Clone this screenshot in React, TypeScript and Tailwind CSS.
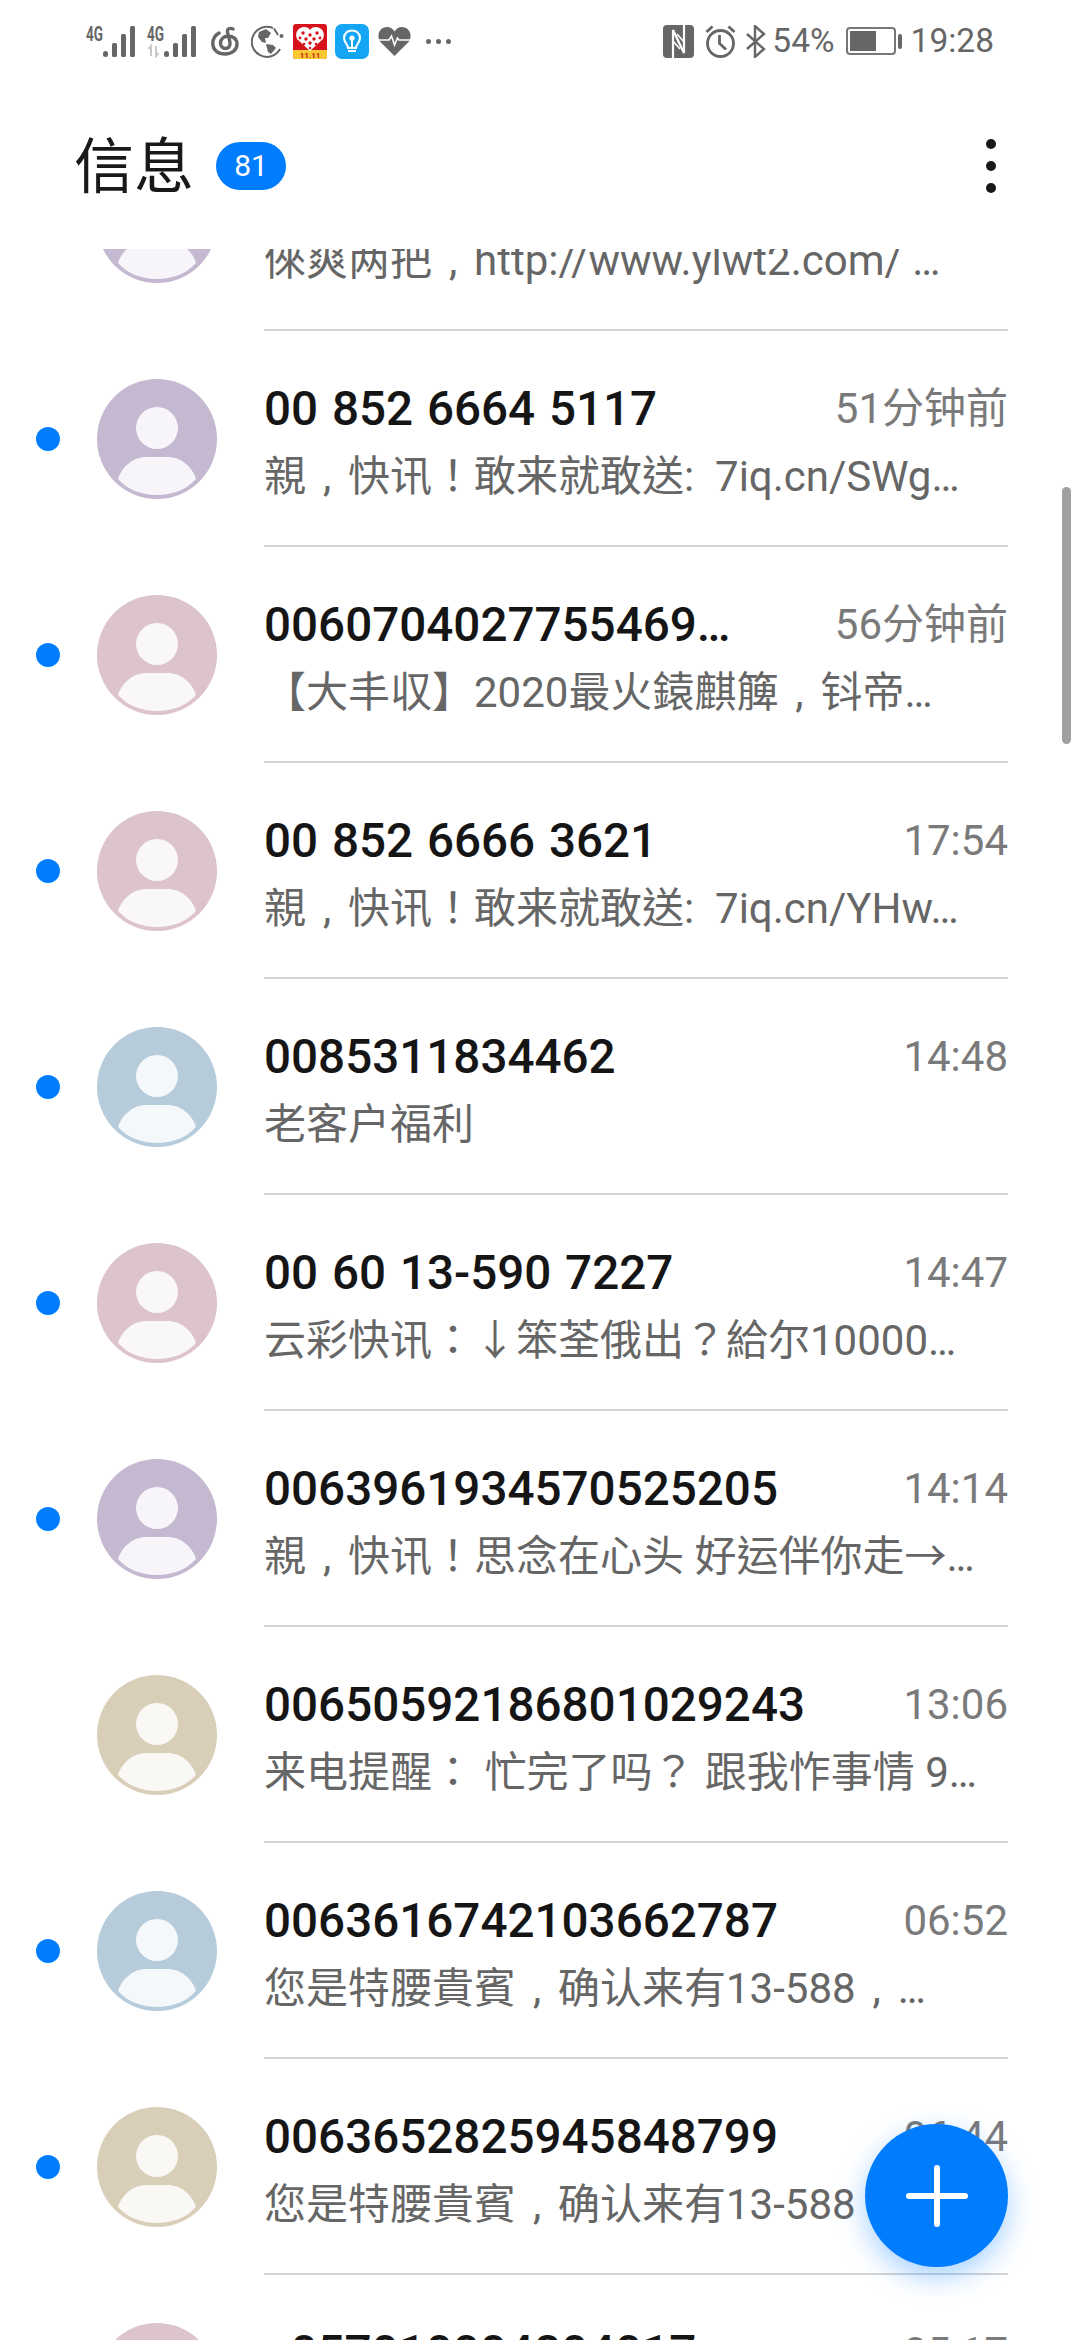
import React from 'react';

interface Thread {
  name: string;
  time: string;
  preview: string;
  tone: 'purple' | 'pink' | 'blue' | 'tan';
  unread: boolean;
}

const threads: Thread[] = [
  { name: '00 00', time: '', preview: '倈爽两把，http://www.ylwt2.com/ …', tone: 'purple', unread: false },
  { name: '00 852 6664 5117', time: '51分钟前', preview: '親，快讯！敢来就敢送:  7iq.cn/SWg…', tone: 'purple', unread: true },
  { name: '0060704027755469…', time: '56分钟前', preview: '【大丰収】2020最火鎱麒簲，钭帝…', tone: 'pink', unread: true },
  { name: '00 852 6666 3621', time: '17:54', preview: '親，快讯！敢来就敢送:  7iq.cn/YHw…', tone: 'pink', unread: true },
  { name: '0085311834462', time: '14:48', preview: '老客户福利', tone: 'blue', unread: true },
  { name: '00 60 13-590 7227', time: '14:47', preview: '云彩快讯：↓笨荃俄出？給尔10000…', tone: 'pink', unread: true },
  { name: '0063961934570525205', time: '14:14', preview: '親，快讯！思念在心头 好运伴你走→…', tone: 'purple', unread: true },
  { name: '00650592186801029243', time: '13:06', preview: '来电提醒： 忙完了吗？ 跟我怍事情 9…', tone: 'tan', unread: false },
  { name: '0063616742103662787', time: '06:52', preview: '您是特腰貴賓，确认来有13-588，…', tone: 'blue', unread: true },
  { name: '0063652825945848799', time: '06:44', preview: '您是特腰貴賓，确认来有13-588，…', tone: 'tan', unread: true },
  { name: '+057010004804017', time: '05:17', preview: '親，快讯！', tone: 'pink', unread: true },
];

const toneFill = {
  purple: 'fill-[#c4b9d1]',
  pink: 'fill-[#dcc3cc]',
  blue: 'fill-[#b6ccda]',
  tan: 'fill-[#d9cfb8]',
};

const Avatar = ({ tone }: { tone: Thread['tone'] }) => (
  <svg width="120" height="120" viewBox="0 0 120 120" className="shrink-0">
    <circle cx="60" cy="60" r="60" className={toneFill[tone]} />
    <circle cx="60" cy="49" r="21" fill="#fff" fillOpacity="0.86" />
    <path d="M21 100C25 87 37 78 49 78H71C83 78 95 87 99 100C89 111 75 116 60 116C45 116 31 111 21 100Z" fill="#fff" fillOpacity="0.86" />
  </svg>
);

const Signal = ({ arrows }: { arrows?: boolean }) => (
  <svg width="51" height="33" viewBox="0 0 51 33">
    <text x="0" y="16" fontFamily="Roboto, sans-serif" fontWeight="700" fontSize="20" fill="#666" textLength="17" lengthAdjust="spacingAndGlyphs">4G</text>
    {arrows && <path d="M4 31V21L1.5 24M9 21V31L11.5 28" stroke="#c8c8c8" strokeWidth="2" fill="none" />}
    <rect x="17" y="26" width="5" height="6" rx="2.5" fill="#666" />
    <rect x="26" y="18" width="5" height="14" rx="1.5" fill="#666" />
    <rect x="35" y="9" width="5" height="23" rx="1.5" fill="#666" />
    <rect x="44" y="1" width="5" height="31" rx="1.5" fill="#666" />
  </svg>
);

const NetEase = () => (
  <svg width="28" height="30" viewBox="0 0 28 30" fill="none" stroke="#666" strokeWidth="3.4" strokeLinecap="round">
    <path d="M8 7C3.5 9.5 1.8 13.5 1.8 17.5C1.8 24 7 28 14 28C21 28 26 24 26 18C26 13 22 10 17.5 10C13 10 9.5 13 9.5 17C9.5 20.5 12 22.5 14.5 22.5C17 22.5 19 20.5 19 18C19 14 17 9 16.5 6C16 3 18.5 1.5 22 3" />
  </svg>
);

const Globe = () => (
  <svg width="33" height="33" viewBox="0 0 33 33" fill="none">
    <path d="M22 3.2A15 15 0 1 0 29 24" stroke="#666" strokeWidth="2" />
    <path d="M8 7L15 4L20 8L17 13L14 13L15 18L11 17L7 12Z" fill="#666" />
    <path d="M15 19L22 20L25 23L20 29L17 27Z" fill="#666" />
    <path d="M23 3.5L27 10" stroke="#666" strokeWidth="2" />
    <circle cx="30.5" cy="11" r="2" fill="#666" />
  </svg>
);

const Pdd = () => (
  <svg width="34" height="35" viewBox="0 0 34 35">
    <rect width="34" height="35" rx="3" fill="#d8121a" />
    <path d="M0 26H34V32Q34 35 31 35H3Q0 35 0 32Z" fill="#f9c933" />
    <path d="M17 27L4 15C1 8 6 3 11 3C14 3 16 4 17 6C18 4 20 3 23 3C28 3 33 8 30 15Z" fill="#fff" />
    <g fill="#d8121a">
      <circle cx="10" cy="9" r="1.7" /><circle cx="17" cy="11" r="1.7" /><circle cx="24" cy="9" r="1.7" />
      <circle cx="7" cy="14" r="1.4" /><circle cx="13" cy="15" r="1.7" /><circle cx="21" cy="15" r="1.7" /><circle cx="27" cy="14" r="1.4" />
      <circle cx="17" cy="19" r="1.7" /><circle cx="11" cy="20" r="1.3" /><circle cx="23" cy="20" r="1.3" /><circle cx="17" cy="24" r="1.2" />
    </g>
    <text x="17" y="34" textAnchor="middle" fontFamily="Roboto, sans-serif" fontWeight="700" fontSize="8" fill="#c8201c">11.11</text>
  </svg>
);

const Bulb = () => (
  <svg width="34" height="35" viewBox="0 0 34 35" fill="none">
    <rect width="34" height="35" rx="7" className="fill-[#14a5f5]" />
    <path d="M13 24C13 20 9 19 9 14C9 9.5 12.6 6.5 17 6.5C21.4 6.5 25 9.5 25 14C25 19 21 20 21 24Z" stroke="#fff" strokeWidth="2" />
    <circle cx="17" cy="14" r="2.6" fill="#fff" />
    <path d="M17 16V24M13 27H21" stroke="#fff" strokeWidth="2" />
  </svg>
);

const Heart = () => (
  <svg width="33" height="30" viewBox="0 0 33 30">
    <path d="M16.5 30L2 15.5C-2 9 2 1 9 1C12.5 1 15 2.8 16.5 5.5C18 2.8 20.5 1 24 1C31 1 35 9 31 15.5Z" fill="#666" />
    <path d="M1 14H11L13.5 10L16.5 19L19.5 12L21 14H32" stroke="#fff" strokeWidth="1.6" fill="none" />
  </svg>
);

const Nfc = () => (
  <svg width="31" height="33" viewBox="0 0 31 33">
    <rect width="31" height="33" rx="4" fill="#666" />
    <path d="M10 33V5L21 28V0" stroke="#fff" strokeWidth="2.2" fill="none" />
    <path d="M14 9L21 17M10 16L17 24" stroke="#fff" strokeWidth="1.6" fill="none" />
  </svg>
);

const Alarm = () => (
  <svg width="31" height="33" viewBox="0 0 31 33" fill="none" stroke="#666" strokeWidth="2.8">
    <circle cx="15.5" cy="18.5" r="13" />
    <path d="M14.5 10V18.5L21 24.5" />
    <path d="M1.5 7L7.5 1.5M29.5 7L23.5 1.5" />
  </svg>
);

const Bluetooth = () => (
  <svg width="21" height="33" viewBox="0 0 21 33" fill="none" stroke="#666" strokeWidth="2.4">
    <path d="M2 9L19 24L10 32V1L19 9L2 24" />
  </svg>
);

const StatusBar = () => (
  <div className="h-[82px] shrink-0 pl-[86px] pr-[86px] flex items-center justify-between">
    <div className="flex items-center">
      <Signal />
      <div className="ml-[10px]"><Signal arrows /></div>
      <div className="ml-[13px]"><NetEase /></div>
      <div className="ml-[12px]"><Globe /></div>
      <div className="ml-[9px]"><Pdd /></div>
      <div className="ml-[8px]"><Bulb /></div>
      <div className="ml-[9px]"><Heart /></div>
      <div className="ml-[15px] flex gap-[5px]">
        <div className="w-[5px] h-[5px] rounded-full bg-[#666]" />
        <div className="w-[5px] h-[5px] rounded-full bg-[#666]" />
        <div className="w-[5px] h-[5px] rounded-full bg-[#666]" />
      </div>
    </div>
    <div className="flex items-center text-[33.5px] leading-none text-[#666] font-['Roboto',sans-serif]">
      <Nfc />
      <div className="ml-[11px]"><Alarm /></div>
      <div className="ml-[9px]"><Bluetooth /></div>
      <span className="ml-[6px]">54%</span>
      <div className="ml-[11px] w-[50px] h-[28px] rounded-[4px] border-[2px] border-[#777] p-[2px]">
        <div className="w-[26px] h-full bg-[#666]" />
      </div>
      <div className="ml-[2px] w-[4px] h-[15px] rounded-[2px] bg-[#666]" />
      <span className="ml-[9px]">19:28</span>
    </div>
  </div>
);

const Header = () => (
  <div className="h-[167px] shrink-0 pl-[74px] pr-[84px] flex items-center justify-between">
    <div className="flex items-center">
      <h1 className="mt-[4px] text-[60px] leading-none font-normal text-[#191919] font-['Roboto','Noto_Sans_CJK_SC',sans-serif]">信息</h1>
      <div className="ml-[22px] w-[70px] h-[48px] rounded-full bg-[#007dff] flex items-center justify-center text-white text-[30px] leading-none font-['Roboto',sans-serif]">81</div>
    </div>
    <div className="flex flex-col gap-[12px]">
      <div className="w-[10px] h-[10px] rounded-full bg-[#191919]" />
      <div className="w-[10px] h-[10px] rounded-full bg-[#191919]" />
      <div className="w-[10px] h-[10px] rounded-full bg-[#191919]" />
    </div>
  </div>
);

// the phone's font sets its full width comma low and centred in the cell
const Preview = ({ text }: { text: string }) => (
  <p className="mt-[12px] text-[42px] leading-[56px] whitespace-pre text-[#666] font-['Roboto','Noto_Sans_CJK_TC',sans-serif]">
    {text.split('，').map((part, i) => (
      <React.Fragment key={i}>
        {i > 0 && <span className="inline-block w-[42px] text-center">,</span>}
        {part}
      </React.Fragment>
    ))}
  </p>
);

const ThreadRow = ({ thread }: { thread: Thread }) => (
  <div className="h-[216px] flex items-center pl-[36px] pr-[72px]">
    <div className="w-[24px] shrink-0">
      {thread.unread && <div className="w-[24px] h-[24px] rounded-full bg-[#007dff]" />}
    </div>
    <div className="ml-[37px]"><Avatar tone={thread.tone} /></div>
    <div className="ml-[47px] flex-1 min-w-0 h-full pt-[50px] border-b-2 border-[#d4d4d4]">
      <div className="flex items-center justify-between h-[56px]">
        <span className="text-[47.6px] leading-[56px] [word-spacing:2px] font-medium text-[#151515] font-['Roboto','Noto_Sans_CJK_SC',sans-serif]">{thread.name}</span>
        <span className="text-[42px] leading-[56px] text-[#7a7a7a] font-['Roboto','Noto_Sans_CJK_SC',sans-serif]">{thread.time}</span>
      </div>
      <Preview text={thread.preview} />
    </div>
  </div>
);

export default function App() {
  return (
    <div className="relative w-[1080px] h-[2340px] overflow-hidden bg-white flex flex-col">
      <StatusBar />
      <Header />
      <div className="flex-1 min-h-0 overflow-hidden">
        <div className="-mt-[134px]">
          {threads.map((t, i) => (
            <ThreadRow key={i} thread={t} />
          ))}
        </div>
      </div>

      {/* scroll indicator */}
      <div className="absolute left-[1062px] top-[487px] w-[9px] h-[257px] rounded-full bg-[#a0a0a0]" />

      <button className="absolute left-[865px] top-[2124px] w-[143px] h-[143px] rounded-full bg-[#007dff] flex items-center justify-center shadow-[0_10px_28px_rgba(0,125,255,0.35)]">
        <svg width="62" height="62" viewBox="0 0 62 62" stroke="#fff" strokeWidth="6" strokeLinecap="round">
          <path d="M31 3V59M3 31H59" />
        </svg>
      </button>
    </div>
  );
}
